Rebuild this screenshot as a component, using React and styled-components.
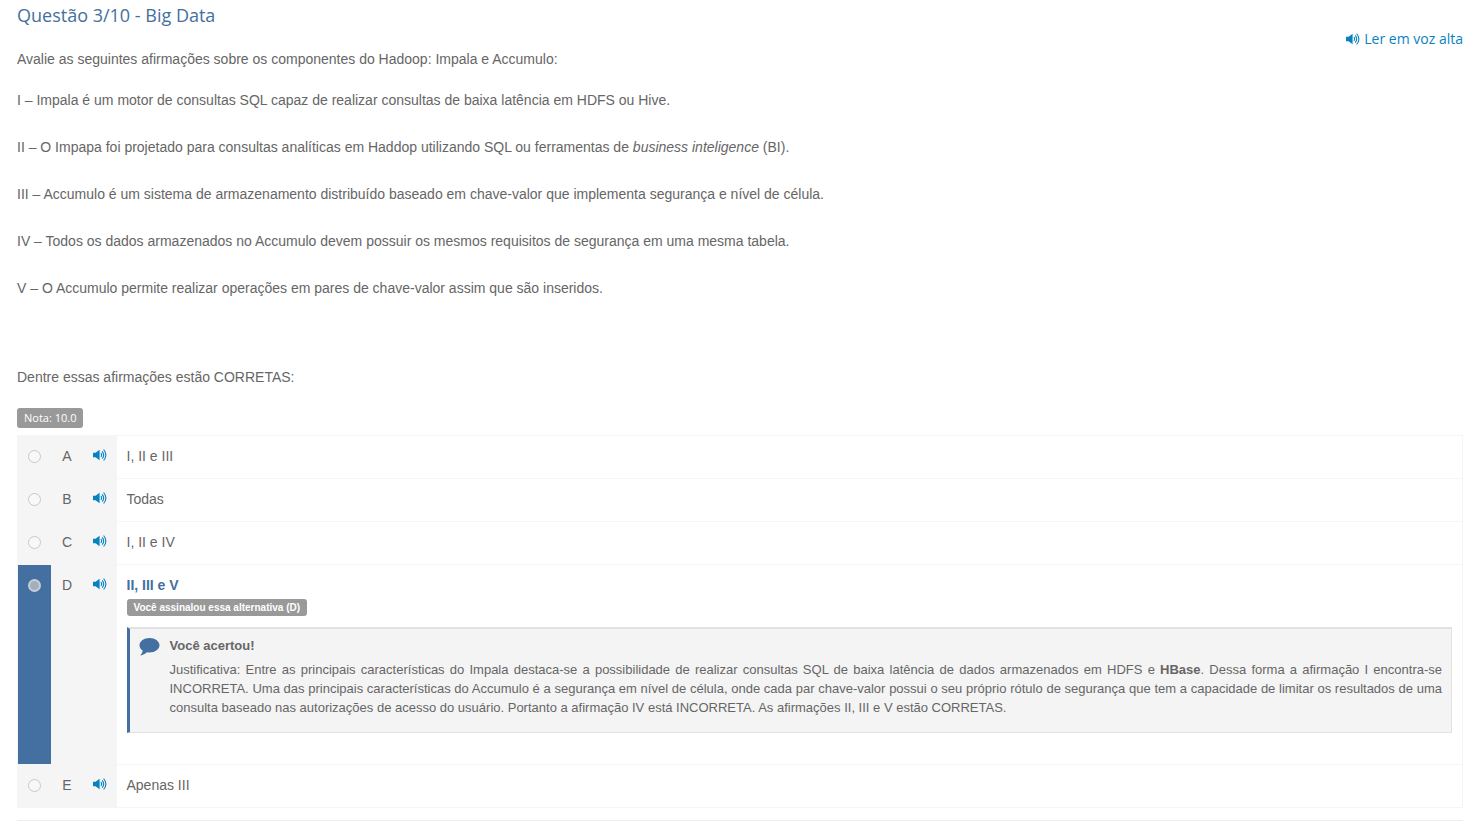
import React, {useState} from 'react'
import styled, {createGlobalStyle, css} from 'styled-components'

const colors = {
	primary: '#4370a0',
	link: '#0782c1',
	text: '#666666',
	muted: '#999999',
	panel: '#f5f5f5',
	note: '#f4f4f4',
	line: '#f5f5f5',
	divider: '#eeeeee',
	noteBorder: '#e2e2e2',
}

const sans = '"Liberation Sans", Arial, sans-serif'
const display = '"Open Sans", sans-serif'

const GlobalStyle = createGlobalStyle`
	*, *::before, *::after {
		box-sizing: border-box;
	}
	body {
		margin: 0;
		background: white;
		color: ${colors.text};
		font-family: ${sans};
		font-size: 14px;
		line-height: 21px;
	}
`

const Page = styled.main`
	padding: 2px 17px 0;
`

const Title = styled.h1`
	margin: 0;
	font-family: ${display};
	font-size: 18px;
	line-height: 26px;
	font-weight: 400;
	color: ${colors.primary};
`

const Toolbar = styled.div`
	display: flex;
	justify-content: flex-end;
	font-family: ${display};
`

const ReadLink = styled.a`
	display: inline-flex;
	align-items: center;
	gap: 4px;
	color: ${colors.link};
	text-decoration: none;
`

const Statement = styled.p`
	margin: 0 0 26px;
`

const Intro = styled(Statement)`
	margin-bottom: 20px;
`

const Closing = styled(Statement)`
	margin: 68px 0 20px;
`

const Badge = styled.span`
	display: block;
	width: fit-content;
	padding: 0 7px;
	border-radius: 3px;
	background: ${colors.muted};
	color: white;
	${props =>
		props.$score
			? css`
					margin-bottom: 7px;
					font-family: ${display};
					font-size: 11px;
					line-height: 20px;
			  `
			: css`
					margin-top: 3px;
					font-size: 10px;
					font-weight: 700;
					line-height: 17px;
			  `};
`

const Options = styled.table`
	width: 100%;
	border-collapse: collapse;
	border: 1px solid ${colors.line};
`

const Cell = styled.td`
	padding: 10px 10px 11px;
	vertical-align: top;
	border-top: 1px solid ${colors.line};
`

const SideCell = styled(Cell)`
	width: 33px;
	padding-left: 0;
	padding-right: 0;
	text-align: center;
	background: ${props => (props.$selected ? colors.primary : colors.panel)};
`

const Radio = styled.input`
	appearance: none;
	display: block;
	width: 13px;
	height: 13px;
	margin: 4px auto;
	border: 1px solid #c8c8c8;
	border-radius: 50%;
	background: #f8f8f8;
	&:checked {
		border: 2px solid #c3ced9;
		background: #a3afba;
	}
`

const SpeakButton = styled.button`
	display: block;
	margin: 2px auto;
	padding: 0;
	border: 0;
	background: none;
	color: ${colors.link};
	cursor: pointer;
	svg {
		display: block;
	}
`

const OptionLabel = styled.label`
	display: block;
	${props =>
		props.$selected &&
		css`
			font-weight: 700;
			color: ${colors.primary};
		`};
`

const Note = styled.div`
	display: flex;
	gap: 10px;
	margin: 11px 0 20px;
	padding: 7px 9px 15px;
	border: 1px solid ${colors.noteBorder};
	border-top-width: 2px;
	border-left: 3px solid ${colors.primary};
	background: ${colors.note};
	font-size: 13px;
	line-height: 19px;
	& > svg {
		flex: none;
		margin-top: 2px;
		color: ${colors.primary};
	}
`

const NoteTitle = styled.strong`
	display: block;
	margin-bottom: 5px;
`

const NoteText = styled.p`
	margin: 0;
	text-align: justify;
`

const Divider = styled.hr`
	margin: 12px 0 0;
	border: 0;
	border-top: 1px solid ${colors.divider};
`

const VolumeIcon = () => (
	<svg width="14" height="14" viewBox="0 0 14 14" fill="none" aria-hidden="true">
		<path d="M0 4.7h2.6L6.6 1.8v10.4L2.6 9.3H0z" fill="currentColor" />
		<path
			d="M7.9 5.1q1.5 1.9 0 3.8M9.2 3.3q3 3.7 0 7.4M10.6 1.5q4.6 5.5 0 11"
			stroke="currentColor"
			strokeWidth="1.1"
		/>
	</svg>
)

const CommentIcon = () => (
	<svg width="21" height="18" viewBox="0 0 21 18" fill="currentColor" aria-hidden="true">
		<path d="M10.5 0C16 0 20.5 3.2 20.5 7.2s-4.500 7.200-10 7.200q-1.300 0-2.500-.2Q5.200 16.900 1.900 17.400q-.5 0-.4-.4 2-1.700 2.200-4.400Q.5 10.500.5 7.200C.5 3.200 5 0 10.500 0z" />
	</svg>
)

const options = [
	{letter: 'A', text: 'I, II e III'},
	{letter: 'B', text: 'Todas'},
	{letter: 'C', text: 'I, II e IV'},
	{letter: 'D', text: 'II, III e V', answered: true},
	{letter: 'E', text: 'Apenas III'},
]

const Feedback = () => (
	<Note>
		<CommentIcon />
		<div>
			<NoteTitle>Você acertou!</NoteTitle>
			<NoteText>
				Justificativa: Entre as principais características do Impala destaca-se a
				possibilidade de realizar consultas SQL de baixa latência de dados
				armazenados em HDFS e <strong>HBase</strong>. Dessa forma a afirmação I
				encontra-se INCORRETA. Uma das principais características do Accumulo é a
				segurança em nível de célula, onde cada par chave-valor possui o seu
				próprio rótulo de segurança que tem a capacidade de limitar os resultados
				de uma consulta baseado nas autorizações de acesso do usuário. Portanto a
				afirmação IV está INCORRETA. As afirmações II, III e V estão CORRETAS.
			</NoteText>
		</div>
	</Note>
)

const Option = ({letter, text, answered, selected, onSelect}) => (
	<tr>
		<SideCell $selected={selected}>
			<Radio
				type="radio"
				name="alternativa"
				id={`alternativa-${letter}`}
				checked={selected}
				onChange={onSelect}
			/>
		</SideCell>
		<SideCell>{letter}</SideCell>
		<SideCell>
			<SpeakButton type="button" aria-label={`Ler alternativa ${letter}`}>
				<VolumeIcon />
			</SpeakButton>
		</SideCell>
		<Cell>
			<OptionLabel htmlFor={`alternativa-${letter}`} $selected={selected}>
				{text}
			</OptionLabel>
			{answered && (
				<>
					<Badge>Você assinalou essa alternativa ({letter})</Badge>
					<Feedback />
				</>
			)}
		</Cell>
	</tr>
)

const App = () => {
	const [selected, setSelected] = useState('D')
	return (
		<Page>
			<GlobalStyle />
			<Title>Questão 3/10 - Big Data</Title>
			<Toolbar>
				<ReadLink href="#ler">
					<VolumeIcon />
					Ler em voz alta
				</ReadLink>
			</Toolbar>
			<Intro>
				Avalie as seguintes afirmações sobre os componentes do Hadoop: Impala e
				Accumulo:
			</Intro>
			<Statement>
				I – Impala é um motor de consultas SQL capaz de realizar consultas de
				baixa latência em HDFS ou Hive.
			</Statement>
			<Statement>
				II – O Impapa foi projetado para consultas analíticas em Haddop utilizando
				SQL ou ferramentas de <em>business inteligence</em> (BI).
			</Statement>
			<Statement>
				III – Accumulo é um sistema de armazenamento distribuído baseado em
				chave-valor que implementa segurança e nível de célula.
			</Statement>
			<Statement>
				IV – Todos os dados armazenados no Accumulo devem possuir os mesmos
				requisitos de segurança em uma mesma tabela.
			</Statement>
			<Statement>
				V – O Accumulo permite realizar operações em pares de chave-valor assim
				que são inseridos.
			</Statement>
			<Closing>Dentre essas afirmações estão CORRETAS:</Closing>
			<Badge $score>Nota: 10.0</Badge>
			<Options>
				<tbody>
					{options.map(option => (
						<Option
							key={option.letter}
							{...option}
							selected={selected === option.letter}
							onSelect={() => setSelected(option.letter)}
						/>
					))}
				</tbody>
			</Options>
			<Divider />
		</Page>
	)
}

export default App
